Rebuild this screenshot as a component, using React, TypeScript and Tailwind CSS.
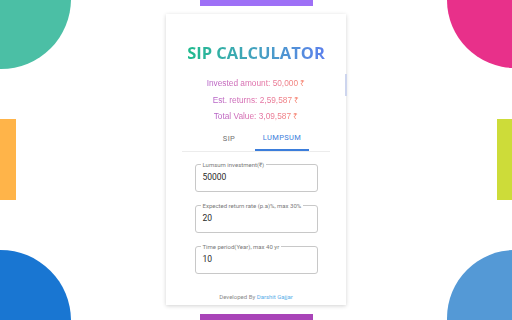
import React from "react";

function Field({ label, value }: { label: string; value: string }) {
  return (
    <div className="relative h-[28px] w-[123px] rounded-[3px] border border-[#c8c8c8] flex items-center pl-[7px]">
      <span className="absolute -top-[5px] left-[5px] bg-white px-[2px] text-[6px] leading-[9px] text-[#7a7a7a] whitespace-nowrap">
        {label}
      </span>
      <span className="text-[8.5px] text-[#2a2a2a]">{value}</span>
    </div>
  );
}

function Line({ label, value }: { label: string; value: string }) {
  return (
    <div className="h-[16.5px] leading-[16.5px] text-[8.3px]">
      <span className="inline-block bg-gradient-to-r from-[#b25ec6] via-[#e06aa6] to-[#f7826a] bg-clip-text text-transparent">
        {label} {value}
      </span>
    </div>
  );
}

export default function App() {
  return (
    <div
      className="relative w-[512px] h-[320px] overflow-hidden bg-white"
      style={{ fontFamily: "Roboto, 'Liberation Sans', sans-serif" }}
    >
      {/* decorations */}
      <div className="absolute -left-[70px] -top-[71px] w-[141px] h-[140px] rounded-full bg-[#4bbfa5]" />
      <div className="absolute left-0 top-[119px] w-[16px] h-[81px] bg-[#ffb449]" />
      <div className="absolute -left-[70px] top-[250px] w-[141px] h-[141px] rounded-full bg-[#1976d2]" />
      <div className="absolute left-[447px] -top-[68px] w-[136px] h-[136px] rounded-full bg-[#e8308a]" />
      <div className="absolute left-[497px] top-[119px] w-[15px] h-[81px] bg-[#cddc39]" />
      <div className="absolute left-[447px] top-[250px] w-[136px] h-[136px] rounded-full bg-[#5499d6]" />
      <div className="absolute left-[200px] top-0 w-[113px] h-[6px] bg-[#9e70f6]" />
      <div className="absolute left-[200px] top-[314px] w-[113px] h-[6px] bg-[#a944b8]" />

      <div className="flex justify-center pt-[14px]">
        <div className="relative w-[180px] h-[291px] bg-white shadow-[0_1px_4px_rgba(0,0,0,0.18)] flex flex-col items-center pt-[26px]">
          <div className="absolute -right-[1px] top-[60px] w-[2px] h-[22px] bg-[#cdd5ee]" />
          <div
            className="h-[26px] leading-[26px] text-[16.5px] font-bold bg-gradient-to-r from-[#1dbb8c] to-[#5c80ec] bg-clip-text text-transparent"
            style={{ fontFamily: "'Open Sans', sans-serif" }}
          >
            SIP CALCULATOR
          </div>
          <div
            className="mt-[9px] flex flex-col items-center"
            style={{ fontFamily: "'Liberation Sans', Arial, sans-serif" }}
          >
            <Line label="Invested amount:" value="50,000 ₹" />
            <Line label="Est. returns:" value="2,59,587 ₹" />
            <Line label="Total Value:" value="3,09,587 ₹" />
          </div>
          <div className="mt-[3px] w-[148px] h-[24px] border-b border-[#ececec] flex justify-center">
            <div className="w-[52px] h-[23px] flex items-center justify-center text-[7.5px] tracking-[0.05em] text-[#707070]">
              SIP
            </div>
            <div className="w-[54px] h-[23px] flex items-center justify-center text-[7.5px] tracking-[0.05em] text-[#3b7ddb] border-b-2 border-[#3b7ddb]">
              LUMPSUM
            </div>
          </div>
          <div className="mt-[12px] flex flex-col gap-[13px]">
            <Field label="Lumsum investment(₹)" value="50000" />
            <Field label="Expected return rate (p.a)%, max 30%" value="20" />
            <Field label="Time period(Year), max 40 yr" value="10" />
          </div>
          <div className="mt-[18px] h-[10px] leading-[10px] text-[6px] text-[#8a8a8a]">
            Developed By <span className="text-[#5aaee8]">Darshit Gajjar</span>
          </div>
        </div>
      </div>
    </div>
  );
}
